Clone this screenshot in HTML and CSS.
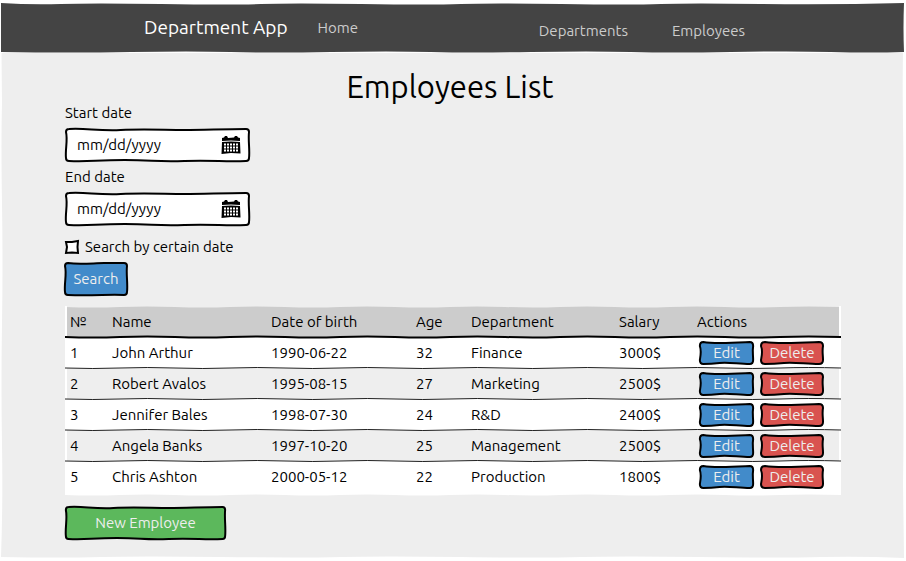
FILE: index.html
```html
<!DOCTYPE html>
<html lang="en">
<head>
<meta charset="utf-8">
<meta name="viewport" content="width=device-width, initial-scale=1">
<title>Employees List</title>
<link rel="stylesheet" href="styles.css">
</head>
<body>
<svg class="defs" aria-hidden="true">
  <symbol id="box" viewBox="0 0 186 34" preserveAspectRatio="none" overflow="visible">
    <path vector-effect="non-scaling-stroke" d="M4 1 C22 0 32 3 56 2 S100 2 120 2 S160 1 182 1 Q185 1 185 4 C184 12 186 22 185 30 Q185 33 182 33 C160 34 150 32 120 33 S90 32 60 32 S25 34 4 33 Q1 33 1 30 C0 22 3 12 1 4 Q1 1 4 1Z"/>
  </symbol>
  <symbol id="short" viewBox="0 0 64 34" preserveAspectRatio="none" overflow="visible">
    <path vector-effect="non-scaling-stroke" d="M4 1 C16 3 30 1 40 1 S54 1 60 1 Q63 1 63 4 C62 12 64 22 63 30 Q63 33 60 33 C46 32 30 34 4 33 Q1 33 1 30 C0 22 3 12 1 4 Q1 1 4 1Z"/>
  </symbol>
  <symbol id="small" viewBox="0 0 64 24" preserveAspectRatio="none" overflow="visible">
    <path vector-effect="non-scaling-stroke" d="M5 1 C18 3 36 2 59 1 Q63 1 63 5 C62 10 63 14 63 19 Q63 23 59 23 C46 23 34 21 24 22 S12 23 5 23 Q1 23 1 19 C2 14 3 10 1 5 Q1 1 5 1Z"/>
  </symbol>
  <symbol id="tick" viewBox="0 0 14 14" overflow="visible">
    <path d="M1 2L7 2L13 1L12.500 7L13 13L7 12.500L1 13L2 7Z"/>
  </symbol>
  <symbol id="calendar" viewBox="0 0 20 18">
    <path d="M1 2L3 1.500L4 0H6L7 2L13 1.500L14 0H16L17 1.500L19 2V5L10 4.500L1 5Z M1 6L10 5.500L19 6L19.500 17.500L10 17L.5 18Z"/>
    <path class="grid-holes" d="M3 8.500H18M3 11.500H18M3 14.500H18"/>
  </symbol>
</svg>
<div class="page">
  <svg class="frame" viewBox="0 0 903 554" preserveAspectRatio="none" aria-hidden="true"><path d="M0 0H903Q901 60 902 120T902 240T902 360T902 480L903 554Q860 552 820 553T700 553T580 553T460 553T340 553T220 553T100 553T0 553Q2 500 1 440T1 320T1 200T1 100Z"/></svg>
  <header class="topbar">
    <svg class="edge" viewBox="0 0 903 50" preserveAspectRatio="none" aria-hidden="true"><path d="M0 0Q30 2 60 1T160 1T260 1T360 1T460 1T560 1T660 1T760 1T903 0Q902 25 903 49Q870 50 830 49T730 49T630 49T530 49T430 49T330 49T230 49T130 49T0 49Z"/></svg>
    <nav class="nav">
      <div class="nav-main"><a class="brand" href="#">Department App</a><a href="#">Home</a></div>
      <div class="nav-links"><a href="#">Departments</a><a href="#">Employees</a></div>
    </nav>
  </header>
  <main class="content">
    <h1>Employees List</h1>
    <form class="filters">
      <div class="field">
        <label for="start">Start date</label>
        <div class="date sketch"><svg class="outline white" aria-hidden="true"><use href="#box"/></svg><input id="start" type="text" placeholder="mm/dd/yyyy"><svg class="cal" aria-hidden="true"><use href="#calendar"/></svg></div>
      </div>
      <div class="field">
        <label for="end">End date</label>
        <div class="date sketch"><svg class="outline white" aria-hidden="true"><use href="#box"/></svg><input id="end" type="text" placeholder="mm/dd/yyyy"><svg class="cal" aria-hidden="true"><use href="#calendar"/></svg></div>
      </div>
      <div class="check">
        <span class="tick sketch"><svg class="outline white" aria-hidden="true"><use href="#tick"/></svg><input id="certain" type="checkbox"></span><label for="certain">Search by certain date</label>
      </div>
      <button class="sketch btn search" type="button"><svg class="outline blue" aria-hidden="true"><use href="#short"/></svg><span>Search</span></button>
    </form>
    <div class="table-wrap">
      <table>
        <colgroup><col class="c-no"><col class="c-name"><col class="c-birth"><col class="c-age"><col class="c-dept"><col class="c-salary"><col class="c-actions"></colgroup>
        <thead><tr><th>№</th><th>Name</th><th>Date of birth</th><th>Age</th><th>Department</th><th>Salary</th><th>Actions</th></tr></thead>
        <tbody>
          <tr><td>1</td><td>John Arthur</td><td>1990-06-22</td><td>32</td><td>Finance</td><td>3000$</td><td><div class="actions"><button class="sketch btn edit" type="button"><svg class="outline blue" aria-hidden="true"><use href="#small"/></svg><span>Edit</span></button><button class="sketch btn delete" type="button"><svg class="outline red" aria-hidden="true"><use href="#small"/></svg><span>Delete</span></button></div></td></tr>
          <tr><td>2</td><td>Robert Avalos</td><td>1995-08-15</td><td>27</td><td>Marketing</td><td>2500$</td><td><div class="actions"><button class="sketch btn edit" type="button"><svg class="outline blue" aria-hidden="true"><use href="#small"/></svg><span>Edit</span></button><button class="sketch btn delete" type="button"><svg class="outline red" aria-hidden="true"><use href="#small"/></svg><span>Delete</span></button></div></td></tr>
          <tr><td>3</td><td>Jennifer Bales</td><td>1998-07-30</td><td>24</td><td>R&amp;D</td><td>2400$</td><td><div class="actions"><button class="sketch btn edit" type="button"><svg class="outline blue" aria-hidden="true"><use href="#small"/></svg><span>Edit</span></button><button class="sketch btn delete" type="button"><svg class="outline red" aria-hidden="true"><use href="#small"/></svg><span>Delete</span></button></div></td></tr>
          <tr><td>4</td><td>Angela Banks</td><td>1997-10-20</td><td>25</td><td>Management</td><td>2500$</td><td><div class="actions"><button class="sketch btn edit" type="button"><svg class="outline blue" aria-hidden="true"><use href="#small"/></svg><span>Edit</span></button><button class="sketch btn delete" type="button"><svg class="outline red" aria-hidden="true"><use href="#small"/></svg><span>Delete</span></button></div></td></tr>
          <tr><td>5</td><td>Chris Ashton</td><td>2000-05-12</td><td>22</td><td>Production</td><td>1800$</td><td><div class="actions"><button class="sketch btn edit" type="button"><svg class="outline blue" aria-hidden="true"><use href="#small"/></svg><span>Edit</span></button><button class="sketch btn delete" type="button"><svg class="outline red" aria-hidden="true"><use href="#small"/></svg><span>Delete</span></button></div></td></tr>
        </tbody>
      </table>
      <svg class="rules" viewBox="0 0 776 190" preserveAspectRatio="none" aria-hidden="true">
        <defs><path id="wave" d="M0 0Q28 1 55 0T110 0T165 0T220 0T275 0T330 0T385 0T440 0T495 0T550 0T605 0T660 0T715 0T776 0"/></defs>
        <use class="page-edge" href="#wave" y="0"/><use class="page-edge" href="#wave" y="190"/>
        <path class="side" d="M1 0V30M1 62V93M1 124V155M775 0V30M775 62V93M775 124V155"/>
        <use class="heavy" href="#wave" y="31"/><use href="#wave" y="62"/><use href="#wave" y="93"/><use href="#wave" y="124"/><use href="#wave" y="155"/>
      </svg>
    </div>
    <button class="sketch btn new" type="button"><svg class="outline green" aria-hidden="true"><use href="#box"/></svg><span>New Employee</span></button>
  </main>
</div>
</body>
</html>
```
FILE: styles.css
```css
* { box-sizing: border-box; }
body {
  margin: 0;
  padding: 3px 2px 4px 1px;
  background: #fff;
  color: #000;
  font: 15px/18px Ubuntu, "Noto Sans", sans-serif;
}
button, input { font: inherit; }
.defs { position: absolute; width: 0; height: 0; }
.page { position: relative; isolation: isolate; }
.frame { position: absolute; inset: 0; z-index: -1; width: 100%; height: 100%; fill: #eee; }
.topbar { position: relative; color: #ccc; background: #fff; }
.edge { position: absolute; inset: 0; width: 100%; height: 100%; fill: #444; }
.nav {
  position: relative;
  display: flex;
  justify-content: space-between;
  padding: 12px 159px 13px 143px;
}
.nav-main, .nav-links { display: flex; align-items: center; line-height: 25px; }
.nav-main { gap: 30px; }
.nav-links { gap: 44px; align-self: flex-end; margin-bottom: -3px; }
.nav a { color: inherit; text-decoration: none; }
.nav .brand { color: #fff; font-size: 19px; }
.content { padding: 17px 63px 18px 64px; }
h1 { margin: 0; padding-right: 6px; font-size: 31px; font-weight: 400; line-height: 34px; text-align: center; }
.filters { display: flex; flex-direction: column; align-items: flex-start; gap: 6px; }
.field { display: flex; flex-direction: column; gap: 6px; }
.date { display: flex; align-items: center; width: 185px; height: 34px; padding: 0 9px 0 12px; }
.sketch { position: relative; isolation: isolate; }
.outline {
  position: absolute;
  inset: 0;
  z-index: -1;
  width: 100%;
  height: 100%;
  overflow: visible;
  stroke: #000;
  stroke-width: 2;
}
.white { fill: #fff; }
.blue { fill: #428bca; }
.red { fill: #d9534f; }
.green { fill: #5cb85c; }
.date input { flex: 1; min-width: 0; padding: 0; border: 0; outline: 0; background: transparent; }
.date input::placeholder { color: #000; opacity: 1; }
.cal { width: 20px; height: 18px; }
.grid-holes { fill: none; stroke: #fff; stroke-width: 2; stroke-dasharray: 2 1; }
.check { display: flex; align-items: center; gap: 6px; padding-top: 6px; }
.tick { width: 14px; height: 14px; }
.tick input { appearance: none; display: block; width: 14px; height: 14px; margin: 0; }
.tick input:checked { background: #000; }
.btn { padding: 0; border: 0; background: transparent; color: #eee; }
.search { width: 64px; height: 34px; margin-left: -1px; }
.table-wrap { position: relative; margin: 10px 0; }
table { width: 100%; table-layout: fixed; border-spacing: 0; }
.c-no { width: 42px; }
.c-name { width: 159px; }
.c-birth { width: 145px; }
.c-age { width: 55px; }
.c-dept { width: 148px; }
.c-salary { width: 78px; }
th, td { height: 31px; padding: 0 5px; font-weight: 400; text-align: left; }
th { background: #ccc; }
tbody tr:nth-child(odd) { background: #fff; }
tbody tr:last-child td { padding-bottom: 4px; height: 35px; }
.rules { position: absolute; inset: 0; width: 100%; height: 100%; fill: none; stroke: #222; stroke-width: 1; pointer-events: none; }
.rules .heavy { stroke: #000; stroke-width: 2; }
.rules .page-edge { stroke: #eee; stroke-width: 2; }
.rules .side { stroke: #fff; stroke-width: 2; }
.actions { display: flex; gap: 6px; padding-left: 2px; }
.edit { width: 55px; height: 24px; }
.delete { width: 64px; height: 24px; }
.new { display: block; width: 161px; height: 34px; }
```
